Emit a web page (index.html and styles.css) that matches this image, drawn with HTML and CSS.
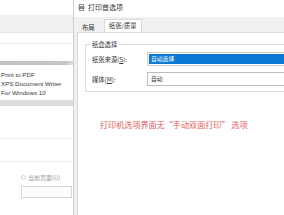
FILE: index.html
```html
<!DOCTYPE html>
<html lang="zh-CN">
<head>
<meta charset="utf-8">
<title>打印首选项</title>
<link rel="stylesheet" href="styles.css">
</head>
<body>
<div class="screen">
  <div class="left">
    <div class="l-top"></div>
    <div class="l-band"></div>
    <div class="l-row1"></div>
    <div class="l-row2"></div>
    <div class="l-scroll"></div>
    <ul class="l-list">
      <li>Print to PDF</li>
      <li>XPS Document Writer</li>
      <li>For Windows 10</li>
    </ul>
    <div class="l-band2"></div>
    <div class="l-sec1"></div>
    <div class="l-sec2"></div>
    <div class="l-radio"><span class="radio"></span><span>当前页面(U)</span></div>
    <div class="l-input"></div>
  </div>
  <div class="dialog">
    <div class="titlebar">
      <svg class="ticon" width="7" height="7" viewBox="0 0 7 7"><rect x="1.5" y="0.5" width="4" height="2" fill="#fff" stroke="#777" stroke-width="0.8"/><rect x="0.5" y="2.5" width="6" height="2.5" fill="#8a8a8a"/><rect x="1.5" y="4.5" width="4" height="2" fill="#fff" stroke="#777" stroke-width="0.8"/></svg>
      <span class="ttext">打印首选项</span>
    </div>
    <div class="tabs">
      <span class="tab">布局</span>
      <span class="tab active">纸张/质量</span>
    </div>
    <div class="body">
      <div class="panel">
        <div class="group">
          <div class="group-title">纸盒选择</div>
          <div class="row">
            <span class="label">纸张来源(<u>S</u>):</span>
            <span class="field sel"><span class="selbar">自动选择</span></span>
          </div>
          <div class="row row2">
            <span class="label">媒体(<u>M</u>):</span>
            <span class="field">自动</span>
          </div>
        </div>
        <p class="note">打印机选项界面无“手动双面打印” 选项</p>
      </div>
    </div>
  </div>
</div>
</body>
</html>
```
FILE: styles.css
```css
html, body {
  margin: 0;
  padding: 0;
  background: #ffffff;
}
.screen {
  width: 284px;
  height: 215px;
  overflow: hidden;
  display: flex;
  font-family: "Noto Sans CJK SC", "Liberation Sans", sans-serif;
}
.left {
  width: 73px;
  flex: none;
  display: flex;
  flex-direction: column;
  background: #fff;
}
.l-top { height: 15px; }
.l-band { height: 17px; background: #f0f0f0; border-bottom: 1px solid #e3e3e3; }
.l-row1 { height: 10px; border-bottom: 1px solid #ececec; }
.l-row2 { height: 17px; }
.l-scroll { height: 4px; background: linear-gradient(90deg, #c2c2c2 0%, #c6c6c6 90%, #dedede 100%); }
.l-list {
  list-style: none;
  margin: 5px 0 0 0;
  padding: 0 0 0 1px;
  font-family: "Liberation Sans", Arial, sans-serif;
  font-size: 6.2px;
  line-height: 9px;
  color: #3a3a3a;
  white-space: nowrap;
}
.l-band2 { height: 6px; background: #dcdcdc; margin-top: 3px; }
.l-sec1 { height: 32px; border-bottom: 1px solid #ececec; }
.l-sec2 { height: 22px; border-bottom: 1px solid #ececec; }
.l-radio {
  display: flex;
  align-items: center;
  gap: 2px;
  margin: 11px 0 0 21px;
  height: 8px;
  font-size: 6px;
  color: #a0a0a0;
  white-space: nowrap;
}
.radio {
  width: 5px;
  height: 5px;
  border: 1px solid #d2d2d2;
  border-radius: 50%;
  box-sizing: border-box;
  flex: none;
}
.l-input {
  margin: 5px 0 0 21px;
  width: 51px;
  height: 12px;
  border: 1px solid #d6d6d6;
  box-sizing: border-box;
}
.dialog {
  flex: none;
  width: 220px;
  display: flex;
  flex-direction: column;
  border-left: 1px solid #cfcfcf;
  background: #f0f0f0;
}
.titlebar {
  height: 17px;
  background: #fff;
  display: flex;
  align-items: center;
  gap: 3px;
  padding-left: 4px;
  padding-bottom: 3px;
  box-sizing: border-box;
}
.ttext { font-size: 7px; color: #333; }
.tabs {
  height: 16px;
  display: flex;
  align-items: flex-end;
  padding-left: 3px;
  box-sizing: border-box;
}
.tab {
  flex: none;
  height: 11px;
  line-height: 11px;
  font-size: 6.3px;
  color: #333;
  padding: 0 5px;
  width: 17px;
}
.tab.active {
  height: 13px;
  line-height: 12px;
  width: auto;
  padding: 0 4px;
  background: #fff;
  border: 1px solid #d9d9d9;
  border-bottom: none;
}
.body {
  flex: 1;
  padding-left: 3px;
  display: flex;
}
.panel {
  flex: 1;
  background: #fff;
  border-left: 1px solid #d9d9d9;
  border-top: 1px solid #d9d9d9;
  margin-top: -1px;
  padding: 11px 0 0 7px;
}
.group {
  border: 1px solid #dcdcdc;
  border-right: none;
  padding: 0 0 5px 6px;
}
.group-title {
  width: fit-content;
  margin: -5px 0 0 -2px;
  padding: 0 2px;
  background: #fff;
  font-size: 6.3px;
  line-height: 9px;
  color: #333;
}
.row {
  display: flex;
  align-items: center;
  margin-top: 3px;
  height: 14px;
}
.row2 { margin-top: 6px; }
.label {
  width: 55px;
  flex: none;
  font-size: 6.3px;
  color: #333;
  white-space: nowrap;
}
.label u { text-decoration: underline; }
.field {
  flex: none;
  width: 150px;
  height: 14px;
  box-sizing: border-box;
  border: 1px solid #bdbdbd;
  font-size: 5.8px;
  line-height: 12px;
  padding-left: 3px;
  color: #333;
}
.field.sel {
  padding: 1px;
  border-color: #cfcfcf;
}
.selbar {
  display: block;
  height: 10px;
  line-height: 10px;
  background: #0a78d4;
  color: #fff;
  padding-left: 2px;
}
.note {
  margin: 28px 0 0 15px;
  font-size: 8.1px;
  line-height: 10px;
  color: #e95c5c;
  white-space: nowrap;
}
```
